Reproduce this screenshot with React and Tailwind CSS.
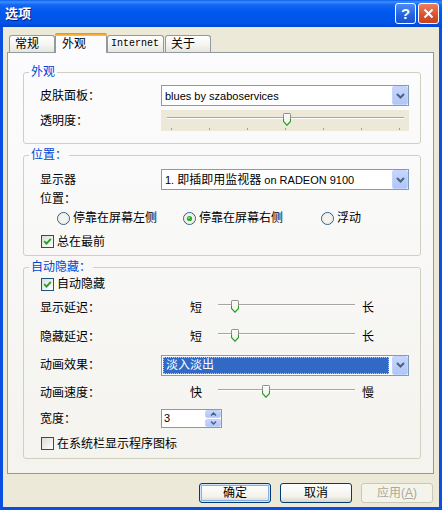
import React from "react";

const F = "font-['Liberation_Sans','Noto_Sans_CJK_SC',sans-serif]";

function Thumb({ className }) {
  return (
    <svg width="8" height="13" viewBox="0 0 8 13" className={"absolute " + className}>
      <path d="M1.2 0.5 H6.8 Q7.5 0.5 7.5 1.2 V8.5 L4 12.2 L0.5 8.5 V1.2 Q0.5 0.5 1.2 0.5 Z" fill="#F6F6F2" stroke="#8E8F8A" />
      <path d="M0.5 6 V8.5 L4 12.2 L7.5 8.5 V6" fill="none" stroke="#21A121" strokeWidth="1.1" />
      <path d="M1.5 1.5 H6.5" stroke="#FFFFFF" />
    </svg>
  );
}

function Check({ checked }) {
  return (
    <span className="w-[13px] h-[13px] shrink-0 border border-[#1C5180] bg-[linear-gradient(135deg,#DCDCD7,#FFFFFF)] flex items-center justify-center">
      {checked && (
        <svg width="9" height="9" viewBox="0 0 9 9">
          <path d="M1.2 4.2 L3.5 6.6 L7.8 1.8" stroke="#21A121" strokeWidth="1.8" fill="none" />
        </svg>
      )}
    </span>
  );
}

function Radio({ checked }) {
  return (
    <svg width="13" height="13" viewBox="0 0 13 13" className="shrink-0">
      <circle cx="6.5" cy="6.5" r="6" fill="#F3F3EF" stroke="#2E5E8E" />
      <circle cx="6.5" cy="6.5" r="5" fill="none" stroke="#E4E3DC" />
      {checked && <circle cx="6.5" cy="6.5" r="2.6" fill="#2CA82C" />}
      {checked && <circle cx="6" cy="6" r="0.9" fill="#9BE39B" />}
    </svg>
  );
}

function ComboBtn() {
  return (
    <div className="w-[16px] h-[19px] shrink-0 rounded-[2px] border border-[#C3D3FD] bg-[linear-gradient(180deg,#C6D6FC,#B0C6F6)] flex items-center justify-center">
      <svg width="9" height="6" viewBox="0 0 9 6">
        <path d="M1 1 L4.5 4.5 L8 1" stroke="#4D6185" strokeWidth="2" fill="none" />
      </svg>
    </div>
  );
}

function Combo({ children }) {
  return (
    <div className="w-[248px] h-[21px] border border-[#7F9DB9] bg-white flex items-center">
      <div className="flex-1 pl-[3px] text-[11px] leading-[14px] whitespace-nowrap overflow-hidden">{children}</div>
      <ComboBtn />
    </div>
  );
}

function Label({ children, w = "w-[121px]" }) {
  return <span className={w + " shrink-0 text-[12px] leading-[14px]"}>{children}</span>;
}

function Group({ title, children, className = "" }) {
  return (
    <fieldset className={"w-[398px] border border-[#D0D0BF] rounded-[3px] " + className}>
      <legend className="ml-[5px] px-[2px] text-[12px] leading-[14px] text-[#0046D5]">{title}</legend>
      {children}
    </fieldset>
  );
}

function SmallSlider({ thumb }) {
  return (
    <div className="relative w-[160px] h-[16px] shrink-0">
      <div className="absolute left-[16px] w-[137px] top-[4px] h-[2px] border-t border-[#A5A5A2] bg-white" />
      <Thumb className={thumb} />
    </div>
  );
}

function Tab({ children, w, selected }) {
  if (selected) {
    return (
      <div className={w + " h-[20px] -mb-[1px] relative z-10 border-x border-[#919B9C] bg-[#FCFCFE] rounded-t-[3px] flex flex-col"}>
        <div className="h-[3px] rounded-t-[2px] bg-[linear-gradient(180deg,#E68B2C,#FFC73C)] -mx-[1px]" />
        <div className="pl-[6px] pt-[1px] text-[12px] leading-[14px]">{children}</div>
      </div>
    );
  }
  return (
    <div className={w + " h-[17px] border border-b-0 border-[#919B9C] rounded-t-[3px] bg-[linear-gradient(180deg,#FFFFFF,#F3F3EF_60%,#E6E5DE)] flex items-center pl-[5px] text-[12px] leading-[14px]"}>
      {children}
    </div>
  );
}

function Button({ children, def, disabled }) {
  let cls = "w-[72px] h-[20px] rounded-[3px] border text-[12px] leading-[14px] flex items-center justify-center ";
  if (disabled) cls += "border-[#C9C7BA] bg-[#F5F4EA] text-[#ACA899]";
  else cls += "border-[#003C74] bg-[linear-gradient(180deg,#FFFFFF,#F3F2EC_70%,#D9D4C6)] text-black";
  if (def) cls += " shadow-[inset_0_0_0_1px_#CEE7FF,inset_0_0_0_2px_#89ADE4]";
  return <div className={cls}>{children}</div>;
}

export default function App() {
  return (
    <div className={"w-[442px] h-[510px] bg-[#0A4FDF] flex flex-col text-black " + F}>
      {/* Title bar */}
      <div className="h-[27px] shrink-0 flex items-center pl-[5px] pr-[3px] bg-[linear-gradient(180deg,#0A5EF2_0%,#3D8EFA_7%,#1466F3_18%,#0058EE_45%,#0054E8_85%,#0045D4_100%)]">
        <span className="text-white font-bold text-[13px] leading-[16px] [text-shadow:1px_1px_#0A1883]">选项</span>
        <div className="ml-auto flex gap-[2px]">
          <div className="w-[21px] h-[21px] rounded-[3px] border border-white bg-[linear-gradient(180deg,#4C8CF5,#2461E0_60%,#1C52CC)] flex items-center justify-center text-white font-bold text-[15px] leading-[15px] font-['Liberation_Sans',sans-serif]">
            ?
          </div>
          <div className="w-[21px] h-[21px] rounded-[3px] border border-white bg-[linear-gradient(180deg,#EE7E5E,#D9502F_60%,#C8421F)] flex items-center justify-center">
            <svg width="11" height="11" viewBox="0 0 11 11">
              <path d="M1.5 1.5 L9.5 9.5 M9.5 1.5 L1.5 9.5" stroke="white" strokeWidth="2" />
            </svg>
          </div>
        </div>
      </div>

      {/* Body */}
      <div className="mx-[3px] h-[480px] bg-[#ECE9D8] pt-[6px] flex flex-col">
        {/* Tabs */}
        <div className="ml-[4px] pl-[2px] h-[19px] flex items-end">
          <Tab w="w-[46px]">常规</Tab>
          <Tab w="w-[52px]" selected>外观</Tab>
          <Tab w="w-[57px]">
            <span className="font-['Liberation_Mono',monospace] text-[10px] -ml-[2px]">Internet</span>
          </Tab>
          <div className="w-[1px]" />
          <Tab w="w-[46px]">关于</Tab>
        </div>

        {/* Panel */}
        <div className="ml-[4px] w-[427px] h-[422px] border border-[#919B9C] bg-[linear-gradient(180deg,#FCFCFE,#F4F3EE)] pt-[12px] pl-[15px]">
          <Group title="外观">
            <div className="pl-[16px] pt-[6px] pb-[12px] flex flex-col gap-[4px]">
              <div className="h-[21px] flex items-center">
                <Label>皮肤面板：</Label>
                <Combo>blues by szaboservices</Combo>
              </div>
              <div className="h-[21px] flex items-center">
                <Label>透明度：</Label>
                <div className="relative w-[248px] h-[21px] bg-[#ECE9D8]">
                  <div className="absolute left-[6px] w-[237px] top-[7px] h-[2px] border-t border-[#A5A5A2] bg-white" />
                  <Thumb className="left-[122px] top-[3px]" />
                  <div className="absolute left-[10px] top-[18px] w-[229px] flex justify-between">
                    <span className="w-px h-[2px] bg-[#A09F98]" />
                    <span className="w-px h-[2px] bg-[#A09F98]" />
                    <span className="w-px h-[2px] bg-[#A09F98]" />
                    <span className="w-px h-[2px] bg-[#A09F98]" />
                    <span className="w-px h-[2px] bg-[#A09F98]" />
                    <span className="w-px h-[2px] bg-[#A09F98]" />
                    <span className="w-px h-[2px] bg-[#A09F98]" />
                  </div>
                </div>
              </div>
            </div>
          </Group>

          <Group title="位置：" className="mt-[4px]">
            <div className="pl-[16px] pt-[7px] flex flex-col">
              <div className="h-[21px] flex items-center">
                <Label>显示器</Label>
                <Combo>
                  1. <span className="text-[12px]">即插即用监视器</span> on RADEON 9100
                </Combo>
              </div>
              <div className="h-[18px] flex items-center">
                <Label>位置：</Label>
              </div>
              <div className="h-[20px] flex items-center pl-[17px] text-[12px] leading-[14px]">
                <div className="w-[126px] flex items-center gap-[3px]">
                  <Radio />
                  <span>停靠在屏幕左侧</span>
                </div>
                <div className="w-[138px] flex items-center gap-[3px]">
                  <Radio checked />
                  <span>停靠在屏幕右侧</span>
                </div>
                <div className="flex items-center gap-[3px]">
                  <Radio />
                  <span>浮动</span>
                </div>
              </div>
              <div className="h-[27px] flex items-center pl-[1px] gap-[3px] text-[12px] leading-[14px]">
                <Check checked />
                <span>总在最前</span>
              </div>
            </div>
          </Group>

          <Group title="自动隐藏：" className="mt-[4px]">
            <div className="pl-[16px] flex flex-col text-[12px] leading-[14px]">
              <div className="h-[20px] flex items-center pl-[1px] gap-[3px]">
                <Check checked />
                <span>自动隐藏</span>
              </div>
              <div className="h-[28px] flex items-center">
                <Label w="w-[150px]">显示延迟：</Label>
                <span className="w-[12px]">短</span>
                <SmallSlider thumb="left-[29px] top-0" />
                <span>长</span>
              </div>
              <div className="h-[30px] flex items-center">
                <Label w="w-[150px]">隐藏延迟：</Label>
                <span className="w-[12px]">短</span>
                <SmallSlider thumb="left-[29px] top-0" />
                <span>长</span>
              </div>
              <div className="h-[26px] flex items-center">
                <Label>动画效果：</Label>
                <div className="w-[248px] h-[21px] border border-[#7F9DB9] bg-white flex items-center">
                  <div className="flex-1 h-[17px] ml-[1px] mr-[3px] border border-dotted border-[#E8C870] bg-[#316AC5] text-white pl-[2px] flex items-center">
                    淡入淡出
                  </div>
                  <ComboBtn />
                </div>
              </div>
              <div className="h-[30px] flex items-center">
                <Label w="w-[150px]">动画速度：</Label>
                <span className="w-[12px]">快</span>
                <SmallSlider thumb="left-[60px] top-0" />
                <span>慢</span>
              </div>
              <div className="h-[21px] flex items-center">
                <Label>宽度：</Label>
                <div className="w-[61px] h-[19px] border border-[#7F9DB9] bg-white flex">
                  <div className="flex-1 pl-[2px] text-[11px] leading-[17px]">3</div>
                  <div className="w-[16px] flex flex-col gap-px">
                    <div className="flex-1 rounded-[2px] border border-[#C3D3FD] bg-[linear-gradient(180deg,#C6D6FC,#B0C6F6)] flex items-center justify-center">
                      <svg width="7" height="4" viewBox="0 0 7 4"><path d="M1 3.5 L3.5 1 L6 3.5" stroke="#4D6185" strokeWidth="1.5" fill="none" /></svg>
                    </div>
                    <div className="flex-1 rounded-[2px] border border-[#C3D3FD] bg-[linear-gradient(180deg,#C6D6FC,#B0C6F6)] flex items-center justify-center">
                      <svg width="7" height="4" viewBox="0 0 7 4"><path d="M1 0.5 L3.5 3 L6 0.5" stroke="#4D6185" strokeWidth="1.5" fill="none" /></svg>
                    </div>
                  </div>
                </div>
              </div>
              <div className="h-[29px] flex items-center pl-[1px] gap-[3px]">
                <Check />
                <span>在系统栏显示程序图标</span>
              </div>
            </div>
          </Group>
        </div>

        {/* Buttons */}
        <div className="mt-[9px] pr-[6px] flex justify-end gap-[9px]">
          <Button def>确定</Button>
          <Button>取消</Button>
          <Button disabled>
            应用(<span className="underline">A</span>)
          </Button>
        </div>
      </div>
    </div>
  );
}
